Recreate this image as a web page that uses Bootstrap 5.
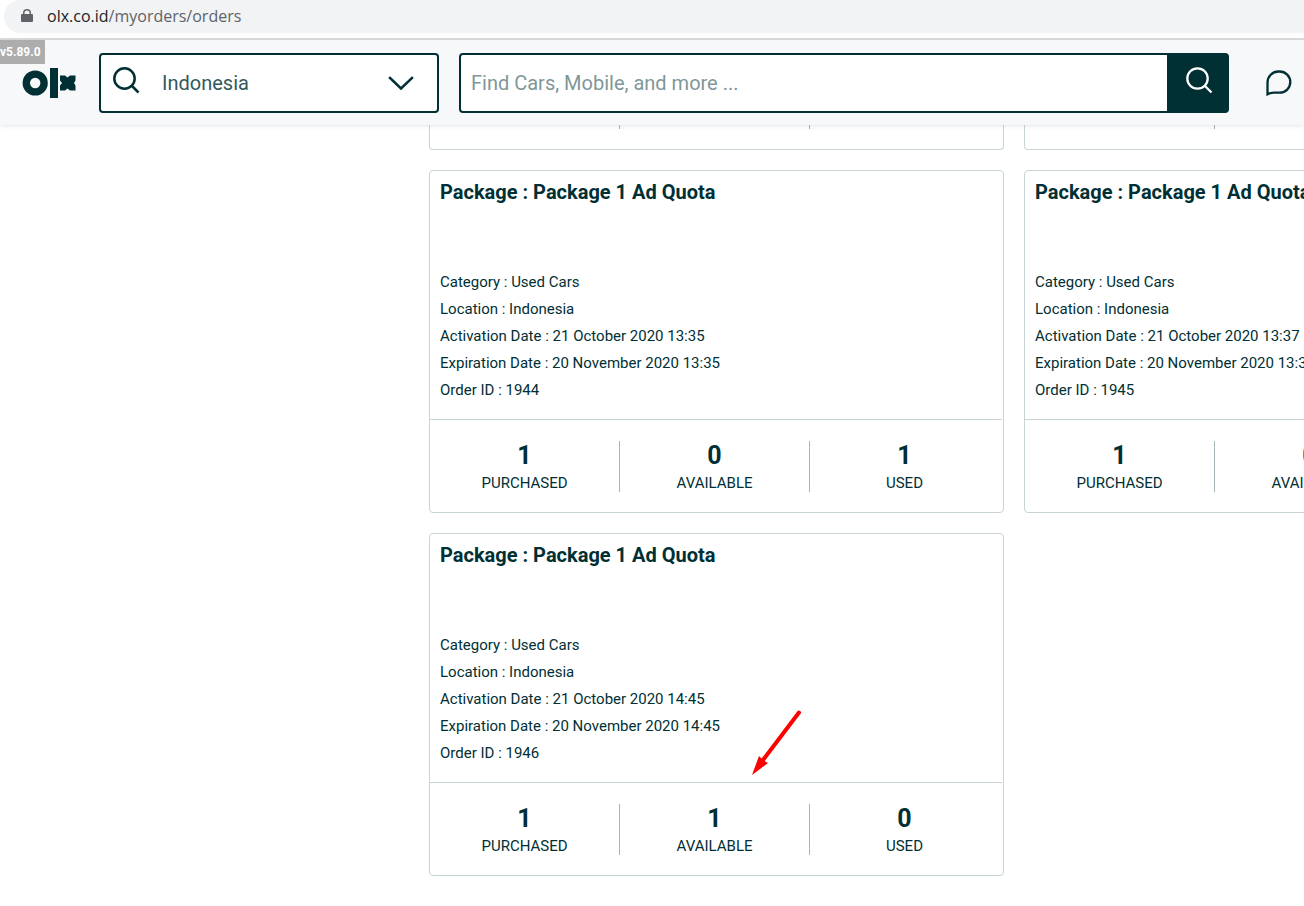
<!DOCTYPE html>
<html lang="en">
<head>
<meta charset="utf-8">
<meta name="viewport" content="width=device-width, initial-scale=1">
<title>My Orders - OLX</title>
<link href="https://cdn.jsdelivr.net/npm/bootstrap@5.3.0/dist/css/bootstrap.min.css" rel="stylesheet">
<style>
  :root { --ink: #002f34; --line: #c8d4d4; }
  body { font-family: Roboto, sans-serif; color: var(--ink); overflow: hidden; }
  .toolbar { border-bottom: 2px solid #dadcde; padding: 0 0 5px 4px; }
  .omnibox { background: #f1f3f4; border-radius: 17px 0 0 17px; height: 33px; padding: 0 0 2px 17px; gap: 14px; font: 16px/24px "Open Sans", sans-serif; color: #5f6368; }
  .omnibox .host { color: #202124; }
  .site-header { background: #f7f8f9; height: 85px; padding: 0 12px 0 22px; box-shadow: 0 1px 4px rgba(0,0,0,.1); z-index: 2; }
  .version { left: 0; top: 0; background: #adadad; color: #fff; font-size: 12px; font-weight: 700; line-height: 24px; padding-right: 4px; }
  .brand { width: 54px; margin-right: 23px; }
  .box { height: 60px; border: 2px solid var(--ink); border-radius: 4px; background: #fff; }
  .location { width: 340px; margin-right: 20px; padding: 0 22px 0 10px; }
  .box input { font-size: 20px; line-height: 24px; border: 0; padding: 0; background: none; color: #33595d; border-radius: 0; box-shadow: none !important; }
  .location input { margin-left: 21px; }
  .search { padding-left: 10px; }
  .search input::placeholder { color: #7f9799; opacity: 1; }
  .search-btn { width: 60px; border: 0; border-radius: 0; background: var(--ink); padding: 0 0 6px 3px; }
  .plain-btn { border: 0; padding: 0; background: none; }
  .chat { margin-left: 37px; }
  .orders { margin-left: 429px; display: grid; grid-template-columns: repeat(2, minmax(575px, 1fr)); gap: 20px; }
  .order { border: 1px solid var(--line); border-radius: 4px; color: var(--ink); }
  .order.tail { border-top: 0; border-radius: 0 0 4px 4px; }
  .details { padding: 8px 10px 15px; }
  .details h2 { font-size: 20px; line-height: 26px; font-weight: 700; margin: 0 0 64px; }
  .details li { font-size: 15px; line-height: 27px; }
  .stats { border-top: 1px solid var(--line); margin-right: 1px; padding: 21px 2px 20px 0; }
  .stats > div { flex: 1 1 0; text-align: center; height: 51px; border-right: 1px solid #a5b6b8; }
  .stats > div:last-child { border-right-color: transparent; }
  .stats strong { display: block; font-size: 25px; line-height: 29px; }
  .stats span { display: block; font-size: 15px; line-height: 27px; }
  .tail .stats { border-top: 0; padding-top: 0; }
  .tail .stats > div { height: 4px; }
  .pointer { left: 321px; top: 175px; }
</style>
</head>
<body>
<div class="toolbar">
  <div class="omnibox d-flex align-items-center">
    <svg width="12" height="14" viewBox="0 0 12 14" fill="#5f6368" aria-hidden="true"><path fill-rule="evenodd" d="M1 5h1V4a4 4 0 0 1 8 0v1h1a1 1 0 0 1 1 1v6a1 1 0 0 1-1 1H1a1 1 0 0 1-1-1V6a1 1 0 0 1 1-1Zm2.500 0h5V4a2.500 2.500 0 0 0-5 0Z"/></svg>
    <div><span class="host">olx.co.id</span>/myorders/orders</div>
  </div>
</div>
<header class="site-header position-relative d-flex align-items-center">
  <div class="version position-absolute">v5.89.0</div>
  <a href="#" class="brand flex-shrink-0" aria-label="OLX home">
    <svg class="d-block" width="54" height="32" viewBox="0 0 54 32"><circle cx="13.200" cy="16" r="8.900" fill="none" stroke="#002f34" stroke-width="7.400"/><path fill="#002f34" d="M28 1h8v30h-8ZM38 8.500h5l2.500 2 2.500-2h5.500v5l-1.500 2.500 1.500 2.500v5H48l-2.500-2-2.500 2h-5v-5l2-2.500-2-2.500Z"/></svg>
  </a>
  <div class="box location d-flex align-items-center flex-shrink-0">
    <svg class="flex-shrink-0 mb-1" width="30" height="30" viewBox="0 0 30 30" fill="none" stroke="#002f34" stroke-width="2.500" aria-hidden="true"><circle cx="13.500" cy="12.500" r="10.200"/><path d="m20.500 19.500 7 7"/></svg>
    <input class="form-control" type="text" value="Indonesia" aria-label="Location">
    <button class="plain-btn" type="button" aria-label="Show locations"><svg class="d-block" width="28" height="16" viewBox="0 0 28 16" fill="none" stroke="#002f34" stroke-width="2.500" stroke-linecap="square"><path d="m3 3 11 10.500L25 3"/></svg></button>
  </div>
  <form class="box search d-flex flex-grow-1">
    <input class="form-control" type="search" placeholder="Find Cars, Mobile, and more ..." aria-label="Search">
    <button class="search-btn flex-shrink-0" type="button" aria-label="Search"><svg width="30" height="30" viewBox="0 0 30 30" fill="none" stroke="#fff" stroke-width="2.300"><circle cx="13.500" cy="13.500" r="10.200"/><path d="m20.500 20.500 7 7"/></svg></button>
  </form>
  <button class="plain-btn chat flex-shrink-0" type="button" aria-label="Chat"><svg class="d-block" width="26" height="26" viewBox="0 0 26 26" fill="none" stroke="#002f34" stroke-width="2.300"><path d="M1.500 24.300V12.500A11 11 0 0 1 12.500 1.500h1.200a10.600 10.600 0 0 1 0 21.200H8q-3.800 0-6.500 1.600Z"/></svg></button>
</header>
<main class="orders">
  <div class="order tail"><div class="stats d-flex"><div></div><div></div><div></div></div></div>
  <div class="order tail"><div class="stats d-flex"><div></div><div></div><div></div></div></div>

  <article class="order">
    <div class="details">
      <h2>Package : Package 1 Ad Quota</h2>
      <ul class="list-unstyled mb-0"><li>Category : Used Cars</li><li>Location : Indonesia</li><li>Activation Date : 21 October 2020 13:35</li><li>Expiration Date : 20 November 2020 13:35</li><li>Order ID : 1944</li></ul>
    </div>
    <div class="stats d-flex"><div><strong>1</strong><span>PURCHASED</span></div><div><strong>0</strong><span>AVAILABLE</span></div><div><strong>1</strong><span>USED</span></div></div>
  </article>

  <article class="order">
    <div class="details">
      <h2>Package : Package 1 Ad Quota</h2>
      <ul class="list-unstyled mb-0"><li>Category : Used Cars</li><li>Location : Indonesia</li><li>Activation Date : 21 October 2020 13:37</li><li>Expiration Date : 20 November 2020 13:37</li><li>Order ID : 1945</li></ul>
    </div>
    <div class="stats d-flex"><div><strong>1</strong><span>PURCHASED</span></div><div><strong>0</strong><span>AVAILABLE</span></div><div></div></div>
  </article>

  <article class="order position-relative">
    <div class="details">
      <h2>Package : Package 1 Ad Quota</h2>
      <ul class="list-unstyled mb-0"><li>Category : Used Cars</li><li>Location : Indonesia</li><li>Activation Date : 21 October 2020 14:45</li><li>Expiration Date : 20 November 2020 14:45</li><li>Order ID : 1946</li></ul>
    </div>
    <div class="stats d-flex"><div><strong>1</strong><span>PURCHASED</span></div><div><strong>1</strong><span>AVAILABLE</span></div><div><strong>0</strong><span>USED</span></div></div>
    <svg class="pointer position-absolute" width="52" height="67" viewBox="0 0 52 67" aria-hidden="true"><path d="M48 3.500 12 51" stroke="#f00" stroke-width="4" stroke-linecap="round"/><path d="M1 66 8 47l3 3 4 3 2 1Z" fill="#f00"/></svg>
  </article>
</main>
<script src="https://cdn.jsdelivr.net/npm/bootstrap@5.3.0/dist/js/bootstrap.bundle.min.js"></script>
</body>
</html>
